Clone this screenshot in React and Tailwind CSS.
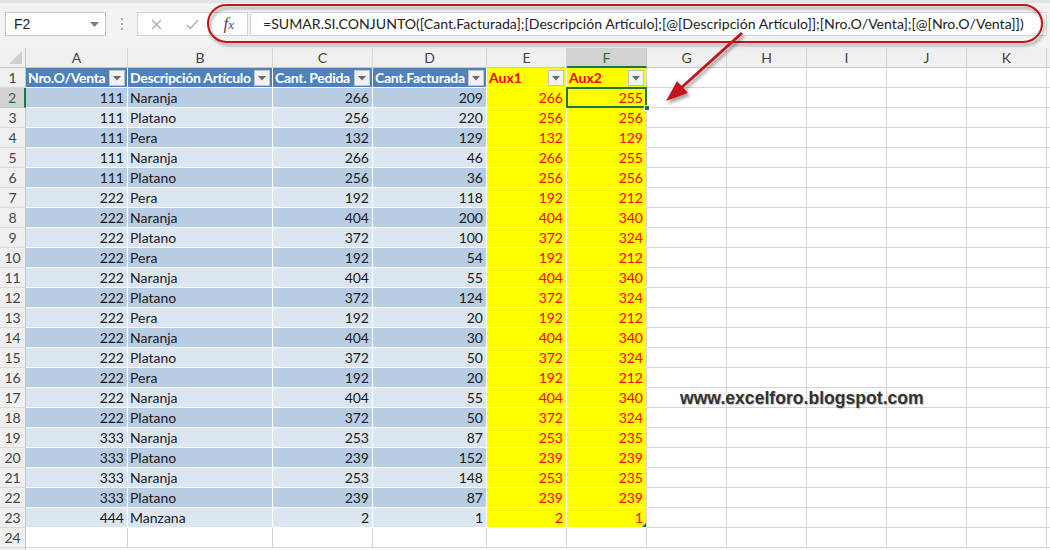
import React from 'react';

const data = [
  [111, 'Naranja', 266, 209, 266, 255],
  [111, 'Platano', 256, 220, 256, 256],
  [111, 'Pera', 132, 129, 132, 129],
  [111, 'Naranja', 266, 46, 266, 255],
  [111, 'Platano', 256, 36, 256, 256],
  [222, 'Pera', 192, 118, 192, 212],
  [222, 'Naranja', 404, 200, 404, 340],
  [222, 'Platano', 372, 100, 372, 324],
  [222, 'Pera', 192, 54, 192, 212],
  [222, 'Naranja', 404, 55, 404, 340],
  [222, 'Platano', 372, 124, 372, 324],
  [222, 'Pera', 192, 20, 192, 212],
  [222, 'Naranja', 404, 30, 404, 340],
  [222, 'Platano', 372, 50, 372, 324],
  [222, 'Pera', 192, 20, 192, 212],
  [222, 'Naranja', 404, 55, 404, 340],
  [222, 'Platano', 372, 50, 372, 324],
  [333, 'Naranja', 253, 87, 253, 235],
  [333, 'Platano', 239, 152, 239, 239],
  [333, 'Naranja', 253, 148, 253, 235],
  [333, 'Platano', 239, 87, 239, 239],
  [444, 'Manzana', 2, 1, 2, 1],
];

const letters = ['A', 'B', 'C', 'D', 'E', 'F', 'G', 'H', 'I', 'J', 'K'];

const FilterButton = () => (
  <span className="absolute right-[2px] top-[2px] w-[16px] h-[16px] bg-[#f2f2f2] border border-[#c2c2c2] flex items-center justify-center">
    <svg width="8" height="5" viewBox="0 0 8 5">
      <path d="M0 0 L8 0 L4 4.5 Z" fill="#6a6a6a" />
    </svg>
  </span>
);

const RowHead = ({ n, selected }) => (
  <div
    className={
      selected
        ? 'bg-[#d2d2d2] border-r-2 border-b border-r-[#217346] border-b-[#c6c6c6] text-center text-[#217346] leading-[19px]'
        : 'bg-[#f0f0f0] border-r border-b border-r-[#c6c6c6] border-b-[#d9d9d9] text-center text-[#444] leading-[19px]'
    }
  >
    {n}
  </div>
);

const EmptyCells = () => (
  <>
    {[0, 1, 2, 3, 4].map((k) => (
      <div key={k} className="border-r border-b border-[#d4d4d4]" />
    ))}
    <div className="border-b border-[#d4d4d4]" />
  </>
);

export default function App() {
  return (
    <div className="w-[1050px] h-[550px] bg-white relative overflow-hidden font-['Lato',sans-serif] text-[14px] text-[#1a1a1a]">
      {/* formula bar */}
      <div className="h-[48px] bg-[#f3f3f3] border-t-[3px] border-[#e3e3e3] flex items-start pt-[9px] pl-[5px]">
        <div className="w-[101px] h-[24px] bg-white border border-[#c6c6c6] flex items-center justify-between pl-[8px] pr-[6px] text-[#222]">
          <span className="font-['Liberation_Sans',sans-serif] text-[14px]">F2</span>
          <svg width="9" height="5" viewBox="0 0 9 5">
            <path d="M0 0 L9 0 L4.5 5 Z" fill="#7a7a7a" />
          </svg>
        </div>
        <div className="w-[31px] h-[24px] flex flex-col items-center justify-center gap-[3px]">
          <span className="w-[2px] h-[2px] bg-[#a6a6a6]" />
          <span className="w-[2px] h-[2px] bg-[#a6a6a6]" />
          <span className="w-[2px] h-[2px] bg-[#a6a6a6]" />
        </div>
        <div className="w-[111px] h-[24px] bg-white border border-[#d4d4d4] flex items-center">
          <div className="w-[37px] flex justify-center">
            <svg width="11" height="11" viewBox="0 0 11 11">
              <path d="M1 1 L10 10 M10 1 L1 10" stroke="#a8a8a8" strokeWidth="1.2" />
            </svg>
          </div>
          <div className="w-[37px] flex justify-center">
            <svg width="13" height="11" viewBox="0 0 13 11">
              <path d="M1 6 L4.5 9.5 L12 1" stroke="#a8a8a8" strokeWidth="1.3" fill="none" />
            </svg>
          </div>
          <div className="w-[37px] flex justify-center items-baseline font-['Liberation_Serif',serif] italic text-[17px] leading-[20px] text-[#4a4a4a]">
            f<span className="text-[13px]">x</span>
          </div>
        </div>
        <div className="ml-[2px] w-[797px] h-[24px] bg-white border border-[#d4d4d4] flex items-center pl-[12px] text-[14.1px] text-[#222] whitespace-nowrap overflow-hidden">
          =SUMAR.SI.CONJUNTO([Cant.Facturada];[Descripción Artículo];[@[Descripción Artículo]];[Nro.O/Venta];[@[Nro.O/Venta]])
        </div>
      </div>

      {/* sheet */}
      <div className="grid grid-cols-[26px_102px_145px_100px_114px_80px_80px_80px_80px_80px_80px_80px_1fr] auto-rows-[20px]">
        {/* column letters */}
        <div className="bg-[#f0f0f0] border-r border-b border-[#c6c6c6] relative">
          <svg className="absolute right-[3px] bottom-[3px]" width="13" height="13" viewBox="0 0 13 13">
            <path d="M13 0 L13 13 L0 13 Z" fill="#cfcfcf" />
          </svg>
        </div>
        {letters.map((l) =>
          l === 'F' ? (
            <div key={l} className="bg-[#d2d2d2] border-r border-r-[#c6c6c6] border-b-2 border-b-[#217346] text-center text-[#217346] leading-[19px]">
              {l}
            </div>
          ) : (
            <div key={l} className="bg-[#f0f0f0] border-r border-b border-r-[#d4d4d4] border-b-[#c6c6c6] text-center text-[#444] leading-[19px]">
              {l}
            </div>
          )
        )}
        <div className="bg-[#f0f0f0] border-b border-[#c6c6c6]" />

        {/* table header */}
        <RowHead n={1} />
        {['Nro.O/Venta', 'Descripción Artículo', 'Cant. Pedida', 'Cant.Facturada'].map((h) => (
          <div key={h} className="relative bg-[#4f81bd] border-r border-b border-white pl-[2px] font-bold text-white leading-[19px] tracking-[-0.3px] whitespace-nowrap overflow-hidden">
            {h}
            <FilterButton />
          </div>
        ))}
        <div className="relative bg-[#ffff00] border-r border-b border-white pl-[2px] font-bold text-[#ff0000] leading-[19px]">
          Aux1
          <FilterButton />
        </div>
        <div className="relative bg-[#ffff00] border-r border-b border-white border-r-[#d4d4d4] pl-[2px] font-bold text-[#ff0000] leading-[19px]">
          Aux2
          <FilterButton />
        </div>
        <EmptyCells />

        {/* rows */}
        {data.map((r, i) => {
          const band = i % 2 === 0 ? 'bg-[#b8cce4]' : 'bg-[#dce6f1]';
          const isLast = i === data.length - 1;
          return (
            <React.Fragment key={i}>
              <RowHead n={i + 2} selected={i === 0} />
              <div className={`${band} border-r border-b border-white text-right pr-[3px] leading-[19px]`}>{r[0]}</div>
              <div className={`${band} border-r border-b border-white pl-[2px] leading-[19px]`}>{r[1]}</div>
              <div className={`${band} border-r border-b border-white text-right pr-[3px] leading-[19px]`}>{r[2]}</div>
              <div className={`${band} border-r border-b border-white text-right pr-[3px] leading-[19px]`}>{r[3]}</div>
              <div className="bg-[#ffff00] border-r border-b border-white text-right pr-[3px] text-[#ff0000] leading-[19px]">{r[4]}</div>
              <div className="relative bg-[#ffff00] border-r border-b border-white border-r-[#d4d4d4] text-right pr-[3px] text-[#ff0000] leading-[19px]">
                {r[5]}
                {i === 0 && (
                  <>
                    <span className="absolute left-[-1px] top-[-1px] right-[-1px] bottom-[-1px] border-2 border-[#217346] z-10" />
                    <span className="absolute right-[-4px] bottom-[-4px] w-[6px] h-[6px] bg-[#217346] border border-white z-20" />
                  </>
                )}
                {isLast && (
                  <svg className="absolute right-0 bottom-0" width="4" height="4" viewBox="0 0 4 4">
                    <path d="M4 0 L4 4 L0 4 Z" fill="#3158a8" />
                  </svg>
                )}
              </div>
              <EmptyCells />
            </React.Fragment>
          );
        })}

        {/* row 24 */}
        <RowHead n={24} />
        {[0, 1, 2, 3, 4, 5].map((k) => (
          <div key={k} className="border-r border-b border-[#d4d4d4]" />
        ))}
        <EmptyCells />
        <div className="bg-[#f0f0f0] border-r border-[#c6c6c6]" />
      </div>

      {/* watermark */}
      <div className="absolute left-[680px] top-[387px] font-['Liberation_Sans',sans-serif] font-bold text-[17.6px] leading-[22px] text-[#333] [text-shadow:1px_1px_1px_rgba(0,0,0,0.25)]">
        www.excelforo.blogspot.com
      </div>

      {/* annotations */}
      <svg className="absolute left-0 top-0 pointer-events-none" width="1050" height="550" viewBox="0 0 1050 550">
        <defs>
          <filter id="sh" x="-10%" y="-10%" width="130%" height="150%">
            <feDropShadow dx="2" dy="3" stdDeviation="1.8" floodColor="#000" floodOpacity="0.35" />
          </filter>
        </defs>
        <rect x="208" y="5" width="834" height="37" rx="18.5" fill="none" stroke="#c3161c" strokeWidth="2" filter="url(#sh)" />
        <g filter="url(#sh)">
          <line x1="742" y1="33" x2="681" y2="88" stroke="#c3161c" strokeWidth="3" />
          <polygon points="666,101 688,93 677,81" fill="#c3161c" />
        </g>
      </svg>
    </div>
  );
}
